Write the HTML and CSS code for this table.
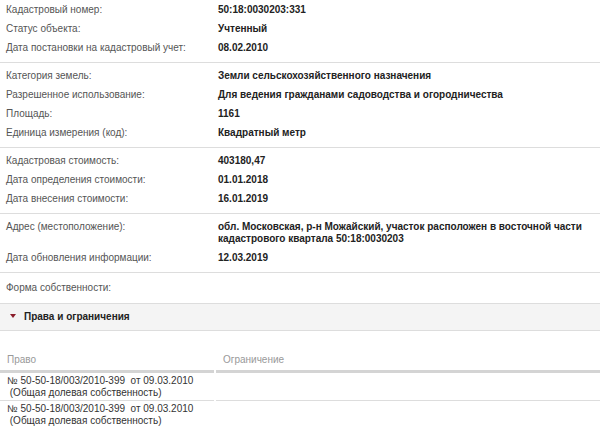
FILE: index.html
```html
<!DOCTYPE html>
<html lang="ru">
<head>
    <meta charset="UTF-8">
    <meta name="viewport" content="width=device-width, initial-scale=1.0">
    <title>Справочная информация по объекту</title>
    <link rel="stylesheet" href="styles.css">
</head>
<body>

    <div class="info">
        <div class="group first">
            <div class="row"><span class="label">Кадастровый номер:</span><span class="value">50:18:0030203:331</span></div>
            <div class="row"><span class="label">Статус объекта:</span><span class="value">Учтенный</span></div>
            <div class="row"><span class="label">Дата постановки на кадастровый учет:</span><span class="value">08.02.2010</span></div>
        </div>
        <div class="group">
            <div class="row"><span class="label">Категория земель:</span><span class="value">Земли сельскохозяйственного назначения</span></div>
            <div class="row"><span class="label">Разрешенное использование:</span><span class="value">Для ведения гражданами садоводства и огородничества</span></div>
            <div class="row"><span class="label">Площадь:</span><span class="value">1161</span></div>
            <div class="row"><span class="label">Единица измерения (код):</span><span class="value">Квадратный метр</span></div>
        </div>
        <div class="group">
            <div class="row"><span class="label">Кадастровая стоимость:</span><span class="value">403180,47</span></div>
            <div class="row"><span class="label">Дата определения стоимости:</span><span class="value">01.01.2018</span></div>
            <div class="row"><span class="label">Дата внесения стоимости:</span><span class="value">16.01.2019</span></div>
        </div>
        <div class="group">
            <div class="row"><span class="label">Адрес (местоположение):</span><span class="value">обл. Московская, р-н Можайский, участок расположен в восточной части кадастрового квартала 50:18:0030203</span></div>
            <div class="row"><span class="label">Дата обновления информации:</span><span class="value">12.03.2019</span></div>
        </div>
        <div class="group last">
            <div class="row"><span class="label">Форма собственности:</span><span class="value"></span></div>
        </div>
    </div>

    <div class="section-head">
        <span class="arrow"></span>
        <span class="section-title">Права и ограничения</span>
    </div>

    <table class="rights">
        <thead>
            <tr>
                <th class="col-right">Право</th>
                <th>Ограничение</th>
            </tr>
        </thead>
        <tbody>
            <tr>
                <td>№ 50-50-18/003/2010-399 &nbsp;от 09.03.2010<br>&nbsp;(Общая долевая собственность)</td>
                <td></td>
            </tr>
            <tr>
                <td>№ 50-50-18/003/2010-399 &nbsp;от 09.03.2010<br>&nbsp;(Общая долевая собственность)</td>
                <td></td>
            </tr>
        </tbody>
    </table>

</body>
</html>
```

FILE: styles.css
```css
/* базовые стили */
body {
    margin: 0;
    font-family: "Liberation Sans", Arial, sans-serif;
    font-size: 10px;
    background-color: #fff;
    color: #333;
}

.group {
    padding: 3px 0 5px;
    border-bottom: 1px solid #ddd;
}

.group.first {
    padding-top: 0;
}

.group.last {
    padding: 5px 0 6px;
    border-bottom: none;
}

.row {
    display: grid;
    grid-template-columns: 212px 1fr;
    padding: 4px 10px 3px 6px;
    line-height: 12px;
}

.label {
    color: #555;
}

.value {
    color: #222;
    font-weight: bold;
}

/* заголовок раздела */
.section-head {
    display: flex;
    align-items: center;
    gap: 8px;
    height: 24px;
    padding: 0 0 2px 10px;
    background-color: #f4f4f4;
    border-top: 1px solid #ddd;
    border-bottom: 1px solid #ddd;
}

.arrow {
    width: 0;
    height: 0;
    border-left: 3px solid transparent;
    border-right: 3px solid transparent;
    border-top: 4px solid #8b1c2a;
}

.section-title {
    font-weight: bold;
    color: #222;
}

/* таблица прав */
.rights {
    width: calc(100% + 4px);
    margin: 20px -2px 0;
    border-collapse: separate;
    border-spacing: 2px 0;
}

.rights th {
    padding: 3px 7px 4px;
    line-height: 12px;
    text-align: left;
    font-weight: normal;
    color: #999;
    border-bottom: 3px solid #d4d4d4;
}

.rights th.col-right {
    width: 200px;
}

.rights td {
    padding: 2px 7px 1px;
    line-height: 12px;
    color: #333;
    border-bottom: 1px solid #ddd;
    vertical-align: top;
}
```
